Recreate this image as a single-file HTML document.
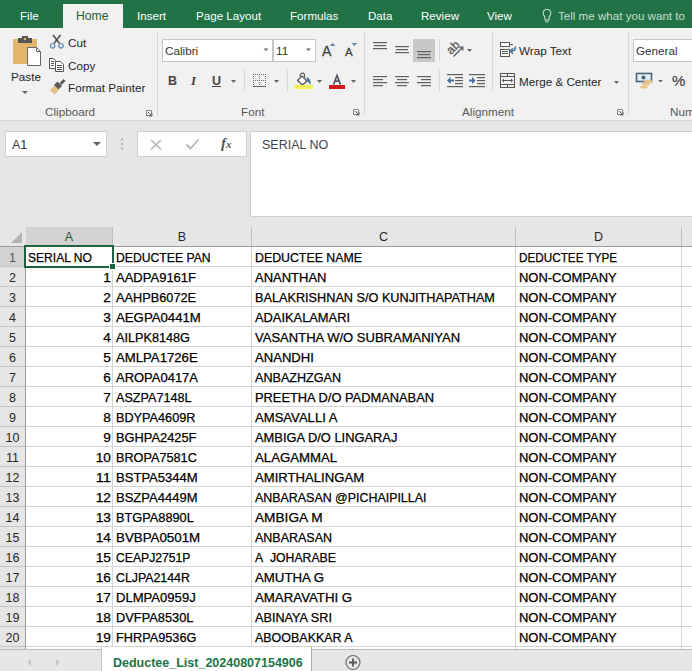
<!DOCTYPE html>
<html><head><meta charset="utf-8">
<style>
*{box-sizing:border-box;margin:0;padding:0}
html,body{width:692px;height:671px;overflow:hidden;background:#e6e6e6;font-family:"Liberation Sans",sans-serif;color:#262626}
.a{position:absolute;white-space:nowrap}
#tabs{position:absolute;left:0;top:0;width:692px;height:28px;background:#217346}
.tab{position:absolute;top:9px;font-size:11.6px;color:#fff;line-height:14px}
#home{position:absolute;left:63px;top:4px;width:60px;height:25px;background:#f1f1f1}
#ribbon{position:absolute;left:0;top:28px;width:692px;height:93px;background:#f1f1f1;border-bottom:1px solid #d4d4d4}
.rt{position:absolute;font-size:11.7px;color:#262626;line-height:14px;white-space:nowrap}
.gl{position:absolute;font-size:11.7px;color:#595959;line-height:14px;white-space:nowrap}
.sep{position:absolute;width:1px;background:#d6d6d6}
.dd{position:absolute;width:0;height:0;border-left:3px solid transparent;border-right:3px solid transparent;border-top:3px solid #606060}
.box{position:absolute;background:#fff;border:1px solid #d0d0d0}
#grid{position:absolute;left:0;top:227px;width:692px;height:422px;background:#fff}
.ch{position:absolute;top:0;height:20px;background:#e6e6e6;border-right:1px solid #bfbfbf;border-bottom:1px solid #9b9b9b;font-size:12.5px;text-align:center;line-height:20px;color:#262626}
.rh{position:absolute;left:0;width:26px;height:20px;background:#e6e6e6;border-right:1px solid #9b9b9b;border-bottom:1px solid #c6c6c6;font-size:12.5px;text-align:center;line-height:22px;color:#262626}
.c{position:absolute;height:20px;font-size:12.5px;line-height:23px;color:#000;-webkit-text-stroke:0.25px #000;white-space:nowrap;overflow:hidden;padding-left:2px}
.ch.sel{background:#d2d2d2;color:#1f5c3a}
.rh.sel{background:#d2d2d2;color:#555}
.c.r{text-align:right;padding-left:0;padding-right:1px}
.gh{position:absolute;height:1px;background:#d4d4d4;left:26px;width:666px}
.gv{position:absolute;width:1px;background:#d4d4d4;top:20px;height:402px}
</style></head><body>
<div id="tabs">
  <div class="tab" style="left:20px">File</div>
  <div id="home"></div>
  <div class="tab" style="left:76px;color:#21603c;font-size:12.2px">Home</div>
  <div class="tab" style="left:137px">Insert</div>
  <div class="tab" style="left:196px">Page Layout</div>
  <div class="tab" style="left:290px">Formulas</div>
  <div class="tab" style="left:368px">Data</div>
  <div class="tab" style="left:421px">Review</div>
  <div class="tab" style="left:487px">View</div>
  <svg class="a" style="left:540px;top:6px" width="14" height="18" viewBox="540 6 14 18">
 <path d="M543.5 14.5 A3.8 3.8 0 1 1 550.5 14.5 L549 17.5 V20 H545 V17.5 Z" fill="none" stroke="#c6dfcf" stroke-width="1.1"/>
 <path d="M545.5 21.8 H548.5" stroke="#c6dfcf" stroke-width="1.1"/>
</svg>
<div class="tab" style="left:558px;color:#c6dfcf">Tell me what you want to</div>
</div>
<div id="ribbon"></div>
<!--RIBBON-->
<!-- ===== Clipboard ===== -->
<svg class="a" style="left:0;top:28px" width="692" height="93" viewBox="0 28 692 93">
 <!-- paste -->
 <rect x="13" y="39" width="24" height="25" fill="#e3b76b"/>
 <rect x="18" y="38" width="14" height="5" fill="#555"/>
 <rect x="22" y="36" width="6" height="3" fill="#555"/>
 <circle cx="25" cy="39" r="1.2" fill="#e3b76b"/>
 <path d="M27.5 47.5 H36.5 L40.5 51.5 V65.5 H27.5 Z" fill="#fff" stroke="#666" stroke-width="1"/>
 <path d="M36.5 47.5 V51.5 H40.5" fill="none" stroke="#666" stroke-width="1"/>
 <path d="M22 91 H28 L25 94 Z" fill="#666"/>
 <!-- scissors -->
 <path d="M53 35 L59.5 43.5 M60.5 35 L54 43.5" stroke="#555" stroke-width="1.7" fill="none"/>
 <circle cx="52.6" cy="45.8" r="2.3" fill="#dbe7f5" stroke="#6e8fbf" stroke-width="1.2"/>
 <circle cx="61" cy="45.8" r="2.3" fill="#dbe7f5" stroke="#6e8fbf" stroke-width="1.2"/>
 <!-- copy -->
 <path d="M49.5 58.5 H53.5 L55.5 60.5 V68.5 H49.5 Z" fill="#fff" stroke="#555" stroke-width="1"/>
 <path d="M51 61.5 H54 M51 63.5 H54 M51 65.5 H54" stroke="#555" stroke-width="1"/>
 <path d="M55.5 61.5 H60.5 L63.5 64.5 V71.5 H55.5 Z" fill="#fff" stroke="#555" stroke-width="1"/>
 <path d="M57 65.5 H62 M57 67.5 H62 M57 69.5 H62" stroke="#555" stroke-width="1"/>
 <!-- format painter -->
 <path d="M50 90 L54.5 85.5 L59 90 L54.5 94.5 Z" fill="#e8c07e"/>
 <path d="M54 85 L57.5 81.5 L62 86 L58.5 89.5 Z" fill="#5a5a5a"/>
 <path d="M59.5 83 L63.5 79 L65.5 81 L61.5 85 Z" fill="#5a5a5a"/>
 <!-- clipboard launcher -->
 <path d="M146.5 110.5 H151.5 V115.5 H146.5 Z" fill="none" stroke="#888" stroke-width="1"/>
 <path d="M148 112 L152 116 M152 113 V116 H149" stroke="#666" stroke-width="1" fill="none"/>
 <rect x="157" y="32" width="1" height="84" fill="#d9d9d9"/>

 <!-- ===== Font ===== -->
 <rect x="162.5" y="39.5" width="110" height="22" fill="#fff" stroke="#c6c6c6"/>
 <path d="M263.5 48.5 H268.5 L266 51 Z" fill="#666"/>
 <rect x="273.5" y="39.5" width="42" height="22" fill="#fff" stroke="#c6c6c6"/>
 <path d="M306 48.5 H311 L308.5 51 Z" fill="#666"/>
 <path d="M330 46 L332.7 43 L335.4 46 Z" fill="#5b7fa6"/>
 <path d="M351.8 43 H357 L354.4 46 Z" fill="#5b7fa6"/>
 <path d="M231 80 H236 L233.5 83 Z" fill="#666"/>
 <rect x="244" y="70" width="1" height="22" fill="#d9d9d9"/>
 <!-- border icon -->
 <g fill="#666">
  <rect x="253" y="74" width="1" height="1"/><rect x="255" y="74" width="1" height="1"/><rect x="257" y="74" width="1" height="1"/><rect x="259" y="74" width="1" height="1"/><rect x="261" y="74" width="1" height="1"/><rect x="263" y="74" width="1" height="1"/><rect x="265" y="74" width="1" height="1"/>
  <rect x="253" y="76" width="1" height="1"/><rect x="253" y="78" width="1" height="1"/><rect x="253" y="80" width="1" height="1"/><rect x="253" y="82" width="1" height="1"/><rect x="253" y="84" width="1" height="1"/>
  <rect x="265" y="76" width="1" height="1"/><rect x="265" y="78" width="1" height="1"/><rect x="265" y="80" width="1" height="1"/><rect x="265" y="82" width="1" height="1"/><rect x="265" y="84" width="1" height="1"/>
  <rect x="259" y="76" width="1" height="1"/><rect x="259" y="78" width="1" height="1"/><rect x="259" y="82" width="1" height="1"/><rect x="259" y="84" width="1" height="1"/>
  <rect x="255" y="80" width="1" height="1"/><rect x="257" y="80" width="1" height="1"/><rect x="259" y="80" width="1" height="1"/><rect x="261" y="80" width="1" height="1"/><rect x="263" y="80" width="1" height="1"/>
  <rect x="253" y="86" width="13" height="1"/>
 </g>
 <path d="M274 80 H279 L276.5 83 Z" fill="#666"/>
 <rect x="287" y="70" width="1" height="22" fill="#d9d9d9"/>
 <!-- fill color -->
 <path d="M297.5 80.5 L302 76 L307 81 L302.5 85 Z" fill="#fff" stroke="#555" stroke-width="1.3" stroke-linejoin="round"/>
 <path d="M300 76.5 Q300 73 303 73 Q305 73.5 304.5 77.5" fill="none" stroke="#555" stroke-width="1.1"/>
 <path d="M306.5 77 Q311.5 79 310.5 84.5 Q308.5 82.5 307.5 81.5 Z" fill="#41729f"/>
 <rect x="294" y="85" width="19" height="4" fill="#f2f25a"/>
 <path d="M317 80 H322 L319.5 83 Z" fill="#666"/>
 <!-- font color -->
 <path d="M333.5 84.5 L337 75.5 L340.5 84.5 M334.8 81.2 H339.2" fill="none" stroke="#4f5761" stroke-width="1.7"/>
 <rect x="329" y="85" width="16" height="4" fill="#cc1a1f"/>
 <path d="M351 80 H356 L353.5 83 Z" fill="#666"/>
 <!-- font launcher -->
 <path d="M353.5 109.5 H358.5 V114.5 H353.5 Z" fill="none" stroke="#888" stroke-width="1"/>
 <path d="M355 111 L359 115 M359 112 V115 H356" stroke="#666" stroke-width="1" fill="none"/>
 <rect x="364" y="32" width="1" height="84" fill="#d9d9d9"/>

 <!-- ===== Alignment ===== -->
 <g fill="#5f5f5f">
  <rect x="373" y="42" width="14" height="1.2"/><rect x="374" y="45" width="12" height="1.2"/><rect x="373" y="48" width="14" height="1.2"/>
  <rect x="395" y="46" width="14" height="1.2"/><rect x="396" y="49" width="12" height="1.2"/><rect x="395" y="52" width="14" height="1.2"/>
 </g>
 <rect x="413" y="39" width="22" height="23" fill="#c8c8c8"/>
 <g fill="#5f5f5f">
  <rect x="417" y="51" width="14" height="1.2"/><rect x="418" y="54" width="12" height="1.2"/><rect x="417" y="57" width="14" height="1.2"/>
  <rect x="373" y="76" width="14" height="1.2"/><rect x="373" y="79" width="10" height="1.2"/><rect x="373" y="82" width="14" height="1.2"/><rect x="373" y="85" width="10" height="1.2"/>
  <rect x="395" y="76" width="14" height="1.2"/><rect x="397" y="79" width="10" height="1.2"/><rect x="395" y="82" width="14" height="1.2"/><rect x="397" y="85" width="10" height="1.2"/>
  <rect x="417" y="76" width="14" height="1.2"/><rect x="421" y="79" width="10" height="1.2"/><rect x="417" y="82" width="14" height="1.2"/><rect x="421" y="85" width="10" height="1.2"/>
 </g>
 <rect x="439" y="39" width="1" height="23" fill="#d9d9d9"/>
 <rect x="439" y="70" width="1" height="22" fill="#d9d9d9"/>
 <!-- orientation -->
 <text x="0" y="0" transform="translate(451,55) rotate(-45)" font-family="Liberation Sans" font-size="12" fill="#555" stroke="#555" stroke-width="0.3">ab</text>
 <path d="M453.5 56.5 L463 47 M459.5 47.2 H462.8 V50.5" stroke="#555" stroke-width="1.2" fill="none"/>
 <path d="M467 49 H472 L469.5 52 Z" fill="#666"/>
 <!-- indent -->
 <g fill="#5f5f5f">
  <rect x="447" y="74" width="16" height="1.2"/><rect x="455" y="77" width="8" height="1.2"/><rect x="455" y="80" width="8" height="1.2"/><rect x="455" y="83" width="8" height="1.2"/><rect x="447" y="86" width="16" height="1.2"/>
  <rect x="469" y="74" width="16" height="1.2"/><rect x="477" y="77" width="8" height="1.2"/><rect x="477" y="80" width="8" height="1.2"/><rect x="477" y="83" width="8" height="1.2"/><rect x="469" y="86" width="16" height="1.2"/>
 </g>
 <path d="M447 80.5 L450.5 77 V79.5 H454 V81.5 H450.5 V84 Z" fill="#41729f"/>
 <path d="M475.5 80.5 L472 77 V79.5 H469 V81.5 H472 V84 Z" fill="#41729f"/>
 <rect x="492" y="32" width="1" height="60" fill="#d9d9d9"/>
 <!-- wrap text -->
 <rect x="500.5" y="42.5" width="9" height="4" fill="#fff" stroke="#555"/>
 <path d="M509.5 44.5 H513" stroke="#555"/>
 <rect x="500.5" y="49.5" width="9" height="7" fill="#fff" stroke="#555"/>
 <path d="M502 51.5 H508 M502 53.5 H508" stroke="#555"/>
 <path d="M515.2 46.5 Q516 51 511 51" stroke="#41729f" stroke-width="1.5" fill="none"/>
 <path d="M510.2 51 L513 48.2 M510.2 51 L513 53.8" stroke="#41729f" stroke-width="1.4" fill="none"/>
 <!-- merge -->
 <rect x="500.5" y="73.5" width="14" height="14" fill="none" stroke="#555"/>
 <path d="M500.5 76.5 H514.5 M500.5 84.5 H514.5 M507.5 73.5 V76.5 M507.5 84.5 V87.5" stroke="#555" fill="none"/>
 <path d="M502.5 80.5 H512.5" stroke="#555"/>
 <path d="M502 80.5 L504 78.5 V82.5 Z M513 80.5 L511 78.5 V82.5 Z" fill="#555"/>
 <path d="M614 81 H619 L616.5 84 Z" fill="#666"/>
 <path d="M617.5 109.5 H622.5 V114.5 H617.5 Z" fill="none" stroke="#888" stroke-width="1"/>
 <path d="M619 111 L623 115 M623 112 V115 H620" stroke="#666" stroke-width="1" fill="none"/>
 <rect x="628" y="32" width="1" height="84" fill="#d9d9d9"/>

 <!-- ===== Number ===== -->
 <rect x="633.5" y="39.5" width="70" height="22" fill="#fff" stroke="#c6c6c6"/>
 <rect x="636.5" y="73.5" width="15" height="8" fill="#e2f0fa" stroke="#4a6378" stroke-width="1.6"/>
 <circle cx="643.5" cy="77.5" r="2" fill="#4a6378"/>
 <ellipse cx="648" cy="81" rx="4" ry="1.6" fill="#e8c487"/>
 <ellipse cx="646" cy="84" rx="4" ry="1.6" fill="#e8c487"/>
 <ellipse cx="644" cy="87" rx="4" ry="1.6" fill="#e8c487"/>
 <path d="M658 80 H663 L660.5 82.5 Z" fill="#666"/>
</svg>
<div class="rt" style="left:11px;top:70px">Paste</div>
<div class="rt" style="left:68px;top:36px">Cut</div>
<div class="rt" style="left:68px;top:59px">Copy</div>
<div class="rt" style="left:68px;top:81px">Format Painter</div>
<div class="gl" style="left:45px;top:105px">Clipboard</div>
<div class="rt" style="left:165px;top:44px;color:#333">Calibri</div>
<div class="rt" style="left:276px;top:44px;color:#333">11</div>
<div class="rt" style="left:322px;top:44px;font-size:14px;line-height:14px;color:#444;-webkit-text-stroke:0.3px #444">A</div>
<div class="rt" style="left:345px;top:46px;font-size:11.5px;line-height:12px;color:#444;-webkit-text-stroke:0.3px #444">A</div>
<div class="rt" style="left:168px;top:74px;font-size:12.5px;font-weight:bold;color:#444">B</div>
<div class="rt" style="left:191px;top:74px;font-size:13px;font-style:italic;font-weight:bold;font-family:'Liberation Serif';color:#444">I</div>
<div class="rt" style="left:212px;top:74px;font-size:12.5px;font-weight:bold;color:#444;text-decoration:underline">U</div>
<div class="gl" style="left:241px;top:105px">Font</div>
<div class="rt" style="left:519px;top:44px">Wrap Text</div>
<div class="rt" style="left:519px;top:75px">Merge &amp; Center</div>
<div class="gl" style="left:462px;top:105px">Alignment</div>
<div class="rt" style="left:636px;top:44px;color:#333">General</div>
<div class="rt" style="left:672px;top:74px;font-size:15px;color:#444;-webkit-text-stroke:0.2px #444">%</div>
<div class="gl" style="left:670px;top:105px">Number</div>

<!--/RIBBON-->

<!-- formula bar -->
<div class="box" style="left:5px;top:131px;width:102px;height:26px"></div>
<div class="rt" style="left:12px;top:138px;font-size:12.5px;color:#333">A1</div>
<div class="dd" style="left:93px;top:142px;border-left-width:4px;border-right-width:4px;border-top-width:4px"></div>
<div class="box" style="left:137px;top:131px;width:110px;height:26px"></div>
<svg class="a" style="left:110px;top:130px" width="140" height="28" viewBox="110 130 140 28">
 <circle cx="122" cy="139.5" r="0.9" fill="#999"/><circle cx="122" cy="144" r="0.9" fill="#999"/><circle cx="122" cy="148.5" r="0.9" fill="#999"/>
 <path d="M151 140 L161 149.5 M161 140 L151 149.5" stroke="#b4b4b4" stroke-width="1.5" fill="none"/>
 <path d="M186.5 144.5 L190.5 148.5 L198.5 139.5" stroke="#b4b4b4" stroke-width="1.8" fill="none"/>
</svg>
<div class="a" style="left:221px;top:135px;font-family:'Liberation Serif',serif;font-style:italic;font-weight:bold;font-size:15px;line-height:16px;color:#555">f<span style="font-size:11px">x</span></div>
<div class="box" style="left:250px;top:131px;width:450px;height:86px"></div>
<div class="rt" style="left:262px;top:138px;font-size:12.5px;color:#444">SERIAL NO</div>

<div id="grid">
<div class="a" style="left:0;top:0;width:692px;height:20px;background:#e6e6e6"></div>
<div class="ch sel" style="left:26px;width:87px">A</div>
<div class="ch" style="left:113px;width:139px">B</div>
<div class="ch" style="left:252px;width:264px">C</div>
<div class="ch" style="left:516px;width:166px">D</div>
<div class="ch" style="left:682px;width:99px"></div>
<svg class="a" style="left:0;top:0" width="25" height="20"><polygon points="22,5 22,16 11,16" fill="#b4b4b4"/></svg>
<div class="a" style="left:0;top:19px;width:692px;height:1px;background:#9b9b9b"></div>
<div class="rh sel" style="top:20px">1</div>
<div class="rh" style="top:40px">2</div>
<div class="rh" style="top:60px">3</div>
<div class="rh" style="top:80px">4</div>
<div class="rh" style="top:100px">5</div>
<div class="rh" style="top:120px">6</div>
<div class="rh" style="top:140px">7</div>
<div class="rh" style="top:160px">8</div>
<div class="rh" style="top:180px">9</div>
<div class="rh" style="top:200px">10</div>
<div class="rh" style="top:220px">11</div>
<div class="rh" style="top:240px">12</div>
<div class="rh" style="top:260px">13</div>
<div class="rh" style="top:280px">14</div>
<div class="rh" style="top:300px">15</div>
<div class="rh" style="top:320px">16</div>
<div class="rh" style="top:340px">17</div>
<div class="rh" style="top:360px">18</div>
<div class="rh" style="top:380px">19</div>
<div class="rh" style="top:400px">20</div>
<div class="gh" style="top:39px"></div>
<div class="gh" style="top:59px"></div>
<div class="gh" style="top:79px"></div>
<div class="gh" style="top:99px"></div>
<div class="gh" style="top:119px"></div>
<div class="gh" style="top:139px"></div>
<div class="gh" style="top:159px"></div>
<div class="gh" style="top:179px"></div>
<div class="gh" style="top:199px"></div>
<div class="gh" style="top:219px"></div>
<div class="gh" style="top:239px"></div>
<div class="gh" style="top:259px"></div>
<div class="gh" style="top:279px"></div>
<div class="gh" style="top:299px"></div>
<div class="gh" style="top:319px"></div>
<div class="gh" style="top:339px"></div>
<div class="gh" style="top:359px"></div>
<div class="gh" style="top:379px"></div>
<div class="gh" style="top:399px"></div>
<div class="gh" style="top:419px"></div>
<div class="gv" style="left:112px"></div>
<div class="gv" style="left:251px"></div>
<div class="gv" style="left:515px"></div>
<div class="gv" style="left:681px"></div>
<div class="a" style="left:0;top:420px;width:25px;height:2px;background:#e6e6e6"></div>
<div class="a" style="left:25px;top:20px;width:1px;height:402px;background:#9b9b9b"></div>
<div class="c" style="left:26px;top:20px;width:86px"><span style="display:inline-block;transform:scaleX(0.965);transform-origin:left">SERIAL NO</span></div>
<div class="c" style="left:114px;top:20px;width:137px"><span style="display:inline-block;transform:scaleX(0.975);transform-origin:left">DEDUCTEE PAN</span></div>
<div class="c" style="left:253px;top:20px;width:262px"><span style="display:inline-block;transform:scaleX(0.987);transform-origin:left">DEDUCTEE NAME</span></div>
<div class="c" style="left:517px;top:20px;width:164px"><span style="display:inline-block;transform:scaleX(0.938);transform-origin:left">DEDUCTEE TYPE</span></div>
<div class="c r" style="left:26px;top:40px;width:86px"><span style="display:inline-block;transform:scaleX(1.090);transform-origin:right">1</span></div>
<div class="c" style="left:114px;top:40px;width:137px"><span style="display:inline-block;transform:scaleX(1.041);transform-origin:left">AADPA9161F</span></div>
<div class="c" style="left:253px;top:40px;width:262px"><span style="display:inline-block;transform:scaleX(1.040);transform-origin:left">ANANTHAN</span></div>
<div class="c" style="left:517px;top:40px;width:164px"><span style="display:inline-block;transform:scaleX(1.037);transform-origin:left">NON-COMPANY</span></div>
<div class="c r" style="left:26px;top:60px;width:86px"><span style="display:inline-block;transform:scaleX(1.090);transform-origin:right">2</span></div>
<div class="c" style="left:114px;top:60px;width:137px"><span style="display:inline-block;transform:scaleX(1.020);transform-origin:left">AAHPB6072E</span></div>
<div class="c" style="left:253px;top:60px;width:262px"><span style="display:inline-block;transform:scaleX(1.015);transform-origin:left">BALAKRISHNAN S/O KUNJITHAPATHAM</span></div>
<div class="c" style="left:517px;top:60px;width:164px"><span style="display:inline-block;transform:scaleX(1.037);transform-origin:left">NON-COMPANY</span></div>
<div class="c r" style="left:26px;top:80px;width:86px"><span style="display:inline-block;transform:scaleX(1.090);transform-origin:right">3</span></div>
<div class="c" style="left:114px;top:80px;width:137px"><span style="display:inline-block;transform:scaleX(1.056);transform-origin:left">AEGPA0441M</span></div>
<div class="c" style="left:253px;top:80px;width:262px"><span style="display:inline-block;transform:scaleX(1.028);transform-origin:left">ADAIKALAMARI</span></div>
<div class="c" style="left:517px;top:80px;width:164px"><span style="display:inline-block;transform:scaleX(1.037);transform-origin:left">NON-COMPANY</span></div>
<div class="c r" style="left:26px;top:100px;width:86px"><span style="display:inline-block;transform:scaleX(1.090);transform-origin:right">4</span></div>
<div class="c" style="left:114px;top:100px;width:137px"><span style="display:inline-block;transform:scaleX(1.013);transform-origin:left">AILPK8148G</span></div>
<div class="c" style="left:253px;top:100px;width:262px"><span style="display:inline-block;transform:scaleX(1.042);transform-origin:left">VASANTHA W/O SUBRAMANIYAN</span></div>
<div class="c" style="left:517px;top:100px;width:164px"><span style="display:inline-block;transform:scaleX(1.037);transform-origin:left">NON-COMPANY</span></div>
<div class="c r" style="left:26px;top:120px;width:86px"><span style="display:inline-block;transform:scaleX(1.090);transform-origin:right">5</span></div>
<div class="c" style="left:114px;top:120px;width:137px"><span style="display:inline-block;transform:scaleX(1.053);transform-origin:left">AMLPA1726E</span></div>
<div class="c" style="left:253px;top:120px;width:262px"><span style="display:inline-block;transform:scaleX(1.046);transform-origin:left">ANANDHI</span></div>
<div class="c" style="left:517px;top:120px;width:164px"><span style="display:inline-block;transform:scaleX(1.037);transform-origin:left">NON-COMPANY</span></div>
<div class="c r" style="left:26px;top:140px;width:86px"><span style="display:inline-block;transform:scaleX(1.090);transform-origin:right">6</span></div>
<div class="c" style="left:114px;top:140px;width:137px"><span style="display:inline-block;transform:scaleX(1.038);transform-origin:left">AROPA0417A</span></div>
<div class="c" style="left:253px;top:140px;width:262px"><span style="display:inline-block;transform:scaleX(1.008);transform-origin:left">ANBAZHZGAN</span></div>
<div class="c" style="left:517px;top:140px;width:164px"><span style="display:inline-block;transform:scaleX(1.037);transform-origin:left">NON-COMPANY</span></div>
<div class="c r" style="left:26px;top:160px;width:86px"><span style="display:inline-block;transform:scaleX(1.090);transform-origin:right">7</span></div>
<div class="c" style="left:114px;top:160px;width:137px"><span style="display:inline-block;transform:scaleX(1.009);transform-origin:left">ASZPA7148L</span></div>
<div class="c" style="left:253px;top:160px;width:262px"><span style="display:inline-block;transform:scaleX(1.028);transform-origin:left">PREETHA D/O PADMANABAN</span></div>
<div class="c" style="left:517px;top:160px;width:164px"><span style="display:inline-block;transform:scaleX(1.037);transform-origin:left">NON-COMPANY</span></div>
<div class="c r" style="left:26px;top:180px;width:86px"><span style="display:inline-block;transform:scaleX(1.090);transform-origin:right">8</span></div>
<div class="c" style="left:114px;top:180px;width:137px"><span style="display:inline-block;transform:scaleX(1.014);transform-origin:left">BDYPA4609R</span></div>
<div class="c" style="left:253px;top:180px;width:262px"><span style="display:inline-block;transform:scaleX(1.047);transform-origin:left">AMSAVALLI A</span></div>
<div class="c" style="left:517px;top:180px;width:164px"><span style="display:inline-block;transform:scaleX(1.037);transform-origin:left">NON-COMPANY</span></div>
<div class="c r" style="left:26px;top:200px;width:86px"><span style="display:inline-block;transform:scaleX(1.090);transform-origin:right">9</span></div>
<div class="c" style="left:114px;top:200px;width:137px"><span style="display:inline-block;transform:scaleX(1.027);transform-origin:left">BGHPA2425F</span></div>
<div class="c" style="left:253px;top:200px;width:262px"><span style="display:inline-block;transform:scaleX(1.030);transform-origin:left">AMBIGA D/O LINGARAJ</span></div>
<div class="c" style="left:517px;top:200px;width:164px"><span style="display:inline-block;transform:scaleX(1.037);transform-origin:left">NON-COMPANY</span></div>
<div class="c r" style="left:26px;top:220px;width:86px"><span style="display:inline-block;transform:scaleX(1.090);transform-origin:right">10</span></div>
<div class="c" style="left:114px;top:220px;width:137px"><span style="display:inline-block;transform:scaleX(1.014);transform-origin:left">BROPA7581C</span></div>
<div class="c" style="left:253px;top:220px;width:262px"><span style="display:inline-block;transform:scaleX(1.056);transform-origin:left">ALAGAMMAL</span></div>
<div class="c" style="left:517px;top:220px;width:164px"><span style="display:inline-block;transform:scaleX(1.037);transform-origin:left">NON-COMPANY</span></div>
<div class="c r" style="left:26px;top:240px;width:86px"><span style="display:inline-block;transform:scaleX(1.167);transform-origin:right">11</span></div>
<div class="c" style="left:114px;top:240px;width:137px"><span style="display:inline-block;transform:scaleX(1.044);transform-origin:left">BSTPA5344M</span></div>
<div class="c" style="left:253px;top:240px;width:262px"><span style="display:inline-block;transform:scaleX(1.050);transform-origin:left">AMIRTHALINGAM</span></div>
<div class="c" style="left:517px;top:240px;width:164px"><span style="display:inline-block;transform:scaleX(1.037);transform-origin:left">NON-COMPANY</span></div>
<div class="c r" style="left:26px;top:260px;width:86px"><span style="display:inline-block;transform:scaleX(1.090);transform-origin:right">12</span></div>
<div class="c" style="left:114px;top:260px;width:137px"><span style="display:inline-block;transform:scaleX(1.041);transform-origin:left">BSZPA4449M</span></div>
<div class="c" style="left:253px;top:260px;width:262px"><span style="display:inline-block;transform:scaleX(0.994);transform-origin:left">ANBARASAN @PICHAIPILLAI</span></div>
<div class="c" style="left:517px;top:260px;width:164px"><span style="display:inline-block;transform:scaleX(1.037);transform-origin:left">NON-COMPANY</span></div>
<div class="c r" style="left:26px;top:280px;width:86px"><span style="display:inline-block;transform:scaleX(1.090);transform-origin:right">13</span></div>
<div class="c" style="left:114px;top:280px;width:137px"><span style="display:inline-block;transform:scaleX(1.021);transform-origin:left">BTGPA8890L</span></div>
<div class="c" style="left:253px;top:280px;width:262px"><span style="display:inline-block;transform:scaleX(1.093);transform-origin:left">AMBIGA M</span></div>
<div class="c" style="left:517px;top:280px;width:164px"><span style="display:inline-block;transform:scaleX(1.037);transform-origin:left">NON-COMPANY</span></div>
<div class="c r" style="left:26px;top:300px;width:86px"><span style="display:inline-block;transform:scaleX(1.090);transform-origin:right">14</span></div>
<div class="c" style="left:114px;top:300px;width:137px"><span style="display:inline-block;transform:scaleX(1.066);transform-origin:left">BVBPA0501M</span></div>
<div class="c" style="left:253px;top:300px;width:262px"><span style="display:inline-block;transform:scaleX(0.999);transform-origin:left">ANBARASAN</span></div>
<div class="c" style="left:517px;top:300px;width:164px"><span style="display:inline-block;transform:scaleX(1.037);transform-origin:left">NON-COMPANY</span></div>
<div class="c r" style="left:26px;top:320px;width:86px"><span style="display:inline-block;transform:scaleX(1.090);transform-origin:right">15</span></div>
<div class="c" style="left:114px;top:320px;width:137px"><span style="display:inline-block;transform:scaleX(0.974);transform-origin:left">CEAPJ2751P</span></div>
<div class="c" style="left:253px;top:320px;width:262px"><span style="display:inline-block;transform:scaleX(0.979);transform-origin:left">A&nbsp; JOHARABE</span></div>
<div class="c" style="left:517px;top:320px;width:164px"><span style="display:inline-block;transform:scaleX(1.037);transform-origin:left">NON-COMPANY</span></div>
<div class="c r" style="left:26px;top:340px;width:86px"><span style="display:inline-block;transform:scaleX(1.090);transform-origin:right">16</span></div>
<div class="c" style="left:114px;top:340px;width:137px"><span style="display:inline-block;transform:scaleX(0.987);transform-origin:left">CLJPA2144R</span></div>
<div class="c" style="left:253px;top:340px;width:262px"><span style="display:inline-block;transform:scaleX(1.058);transform-origin:left">AMUTHA G</span></div>
<div class="c" style="left:517px;top:340px;width:164px"><span style="display:inline-block;transform:scaleX(1.037);transform-origin:left">NON-COMPANY</span></div>
<div class="c r" style="left:26px;top:360px;width:86px"><span style="display:inline-block;transform:scaleX(1.090);transform-origin:right">17</span></div>
<div class="c" style="left:114px;top:360px;width:137px"><span style="display:inline-block;transform:scaleX(1.046);transform-origin:left">DLMPA0959J</span></div>
<div class="c" style="left:253px;top:360px;width:262px"><span style="display:inline-block;transform:scaleX(1.060);transform-origin:left">AMARAVATHI G</span></div>
<div class="c" style="left:517px;top:360px;width:164px"><span style="display:inline-block;transform:scaleX(1.037);transform-origin:left">NON-COMPANY</span></div>
<div class="c r" style="left:26px;top:380px;width:86px"><span style="display:inline-block;transform:scaleX(1.090);transform-origin:right">18</span></div>
<div class="c" style="left:114px;top:380px;width:137px"><span style="display:inline-block;transform:scaleX(1.026);transform-origin:left">DVFPA8530L</span></div>
<div class="c" style="left:253px;top:380px;width:262px"><span style="display:inline-block;transform:scaleX(1.013);transform-origin:left">ABINAYA SRI</span></div>
<div class="c" style="left:517px;top:380px;width:164px"><span style="display:inline-block;transform:scaleX(1.037);transform-origin:left">NON-COMPANY</span></div>
<div class="c r" style="left:26px;top:400px;width:86px"><span style="display:inline-block;transform:scaleX(1.090);transform-origin:right">19</span></div>
<div class="c" style="left:114px;top:400px;width:137px"><span style="display:inline-block;transform:scaleX(1.018);transform-origin:left">FHRPA9536G</span></div>
<div class="c" style="left:253px;top:400px;width:262px"><span style="display:inline-block;transform:scaleX(0.997);transform-origin:left">ABOOBAKKAR A</span></div>
<div class="c" style="left:517px;top:400px;width:164px"><span style="display:inline-block;transform:scaleX(1.037);transform-origin:left">NON-COMPANY</span></div>
<div class="a" style="left:24px;top:18px;width:90px;height:23px;border:2px solid #1e6340"></div>
<div class="a" style="left:109px;top:36px;width:7px;height:7px;background:#fff"></div>
<div class="a" style="left:110px;top:37px;width:5px;height:5px;background:#1e6340"></div>
</div>

<!-- sheet tabs -->
<div class="a" style="left:0;top:649px;width:692px;height:22px;background:#e6e6e6;border-top:1px solid #b9b9b9"></div>
<div class="a" style="left:101px;top:647px;width:211px;height:24px;background:#fff;border-left:1px solid #c6c6c6;border-right:1px solid #ababab"></div>
<div class="a" style="left:113px;top:656px;font-size:12.5px;font-weight:bold;color:#217346;line-height:14px">Deductee_List_20240807154906</div>
<svg class="a" style="left:0;top:649px" width="692" height="22" viewBox="0 649 692 22">
 <path d="M31 659 L27.5 662.5 L31 666 Z" fill="#c4c4c4"/>
 <path d="M56 659 L59.5 662.5 L56 666 Z" fill="#c4c4c4"/>
 <circle cx="353" cy="662.5" r="7" fill="none" stroke="#6b6b6b" stroke-width="1.2"/>
 <path d="M349 662.5 H357 M353 658.5 V666.5" stroke="#555" stroke-width="1.8"/>
</svg>
</body></html>
